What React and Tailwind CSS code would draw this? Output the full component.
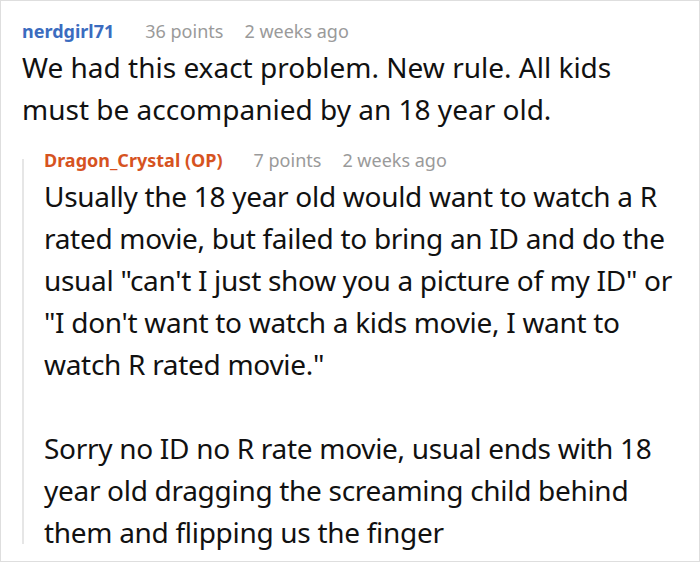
import React from 'react';

const font = { fontFamily: '"Noto Sans", "Open Sans", sans-serif' };

const CommentHeader = ({ author, authorClass, points, time }) => (
  <div className="flex items-baseline h-[24px] leading-[24px] text-[18px] whitespace-nowrap">
    <span className={`font-bold ${authorClass}`}>{author}</span>
    <span className="ml-[31px] text-[#9a9a9a]">{points}</span>
    <span className="ml-[21px] text-[#9a9a9a]">{time}</span>
  </div>
);

const App = () => {
  return (
    <div
      className="w-[700px] h-[562px] bg-white border border-[#dedede] pt-[18px] pl-[21px] pr-[23px] overflow-hidden text-[#111]"
      style={font}
    >
      <CommentHeader
        author="nerdgirl71"
        authorClass="text-[#3b6cbf]"
        points="36 points"
        time="2 weeks ago"
      />
      <p className="mt-[3px] text-[28px] leading-[42px]">
        We had this exact problem. New rule. All kids must be accompanied by an 18 year old.
      </p>

      <div className="flex mt-[18px]">
        <div className="w-[2px] bg-[#e6e6e6] mt-[11px] mb-[9px] shrink-0" />
        <div className="pl-[20px] flex-1">
          <CommentHeader
            author="Dragon_Crystal (OP)"
            authorClass="text-[#d6531f]"
            points="7 points"
            time="2 weeks ago"
          />
          <div className="mt-[3px] text-[28px] leading-[42px] tracking-[-0.3px] whitespace-nowrap">
            <p>
              Usually the 18 year old would want to watch a R<br />
              rated movie, but failed to bring an ID and do the<br />
              usual "can't I just show you a picture of my ID" or<br />
              "I don't want to watch a kids movie, I want to<br />
              watch R rated movie."
            </p>
            <p className="mt-[42px]">
              Sorry no ID no R rate movie, usual ends with 18<br />
              year old dragging the screaming child behind<br />
              them and flipping us the finger
            </p>
          </div>
        </div>
      </div>
    </div>
  );
};

export default App;
